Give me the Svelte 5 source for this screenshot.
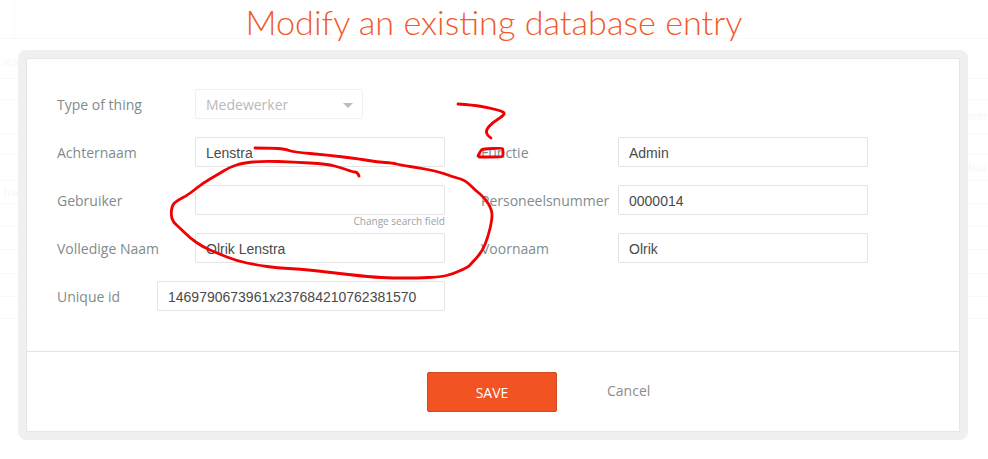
<script>
  // rows of the table that sits faded behind the modal
  const lines = [38, 78, 99, 133, 154, 180, 203, 226, 249, 273, 296, 318];
  const ghosts = [
    { text: 'ata', top: 52, right: false },
    { text: 'tra', top: 182, right: false },
    { text: 'entr', top: 106, right: true },
    { text: 'Naa', top: 158, right: true },
  ];

  // red pen annotation, traced from the screenshot
  const strokes = [
    [[255,148],[270,148],[285,149],[293,152],[327,155],[360,159],[377,162],[393,163],[400,165],[420,168],[440,172],[453,177],[465,180],[475,190],[485,198],[492,210],[492,220],[488,237],[482,252],[470,265],[468,267],[453,274],[440,277],[417,278],[393,278],[370,277],[327,272],[300,269],[277,268],[257,265],[237,261],[217,253],[203,247],[190,238],[180,228],[173,222],[171,215],[172,205],[178,200],[188,195],[203,183],[217,175],[230,167],[243,163],[263,161],[293,162],[327,164],[342,168],[353,172],[357,172],[359,176]],
    [[458,104],[473,105],[490,108],[505,112],[503,116],[492,123],[486,130],[487,135],[491,138]],
    [[478,156],[481,150],[483,149],[502,148],[503,149],[503,156],[501,157],[481,157],[478,157],[480,152]],
  ];

  function smooth(pts) {
    let d = `M${pts[0][0]} ${pts[0][1]}`;
    for (let i = 1; i < pts.length - 1; i++) {
      const mx = (pts[i][0] + pts[i + 1][0]) / 2;
      const my = (pts[i][1] + pts[i + 1][1]) / 2;
      d += ` Q${pts[i][0]} ${pts[i][1]} ${mx} ${my}`;
    }
    const last = pts[pts.length - 1];
    return d + ` L${last[0]} ${last[1]}`;
  }
</script>

<div class="backdrop">
  <div class="corner"></div>
  {#each lines as y}
    <div class="line" style="top:{y}px"></div>
  {/each}
  {#each ghosts as g}
    <span class="ghost" class:right={g.right} style="top:{g.top}px">{g.text}</span>
  {/each}
</div>

<main class="page">
  <h1>Modify an existing database entry</h1>

  <section class="modal">
    <div class="modal-inner">
      <form class="fields">
        <div class="row">
          <label for="type">Type of thing</label>
          <div class="select">
            <select id="type" disabled><option>Medewerker</option></select>
            <span class="caret"></span>
          </div>
        </div>
        <div></div>

        <div class="row">
          <label for="achternaam">Achternaam</label>
          <input id="achternaam" value="Lenstra" />
        </div>
        <div class="row">
          <label for="functie">Functie</label>
          <input id="functie" value="Admin" />
        </div>

        <div class="row">
          <label for="gebruiker">Gebruiker</label>
          <div class="with-hint">
            <input id="gebruiker" value="" />
            <a class="hint" href="#search">Change search field</a>
          </div>
        </div>
        <div class="row">
          <label for="personeel">Personeelsnummer</label>
          <input id="personeel" value="0000014" />
        </div>

        <div class="row">
          <label for="naam">Volledige Naam</label>
          <input id="naam" value="Olrik Lenstra" />
        </div>
        <div class="row">
          <label for="voornaam">Voornaam</label>
          <input id="voornaam" value="Olrik" />
        </div>

        <div class="row">
          <label for="uid">Unique id</label>
          <input id="uid" class="wide" value="1469790673961x237684210762381570" />
        </div>
      </form>

      <footer class="actions">
        <button type="button" class="save">SAVE</button>
        <button type="button" class="cancel">Cancel</button>
      </footer>
    </div>
  </section>
</main>

<svg class="pen" width="988" height="459" viewBox="0 0 988 459" aria-hidden="true">
  {#each strokes as s}
    <path d={smooth(s)} />
  {/each}
</svg>

<style>
  :global(body) {
    background: #fff;
    font-family: "Open Sans", sans-serif;
  }

  .backdrop {
    position: absolute;
    inset: 0;
    width: 988px;
    height: 459px;
    overflow: hidden;
  }
  .corner {
    position: absolute;
    left: 14px;
    top: 0;
    height: 38px;
    width: 1px;
    background: #fafafa;
  }
  .line {
    position: absolute;
    left: 0;
    right: 0;
    height: 1px;
    background: #f9f9f9;
  }
  .ghost {
    position: absolute;
    right: 970px;
    font-size: 11px;
    line-height: 20px;
    color: #f1f7fb;
  }
  .ghost.right {
    right: auto;
    left: 968px;
    font-size: 10px;
    color: #f6f6f6;
  }

  .page {
    position: relative;
    width: 988px;
  }

  h1 {
    margin: 0;
    height: 50px;
    text-align: center;
    font-family: Lato, sans-serif;
    font-weight: 300;
    font-size: 34.2px;
    line-height: 43px;
    color: #f15a2b;
  }

  .modal {
    margin: 0 20px 0 18px;
    border: 8px solid #f0f0f0;
    border-radius: 8px;
    background: #fff;
  }
  .modal-inner {
    border: 1px solid #e6e6e6;
    background: #fff;
  }

  .fields {
    display: grid;
    grid-template-columns: 388px 387px;
    grid-auto-rows: 30px;
    column-gap: 36px;
    row-gap: 18px;
    height: 293px;
    box-sizing: border-box;
    padding: 30px 0 0 30px;
    border-bottom: 1px solid #e3e3e3;
  }

  .row {
    display: flex;
    justify-content: space-between;
    align-items: flex-start;
  }
  label {
    padding-top: 1px;
    font-size: 14px;
    line-height: 30px;
    color: #7f8c8d;
    white-space: nowrap;
  }

  input {
    width: 250px;
    height: 30px;
    box-sizing: border-box;
    margin: 0;
    padding: 1px 10px 0;
    border: 1px solid #e3e3e3;
    border-radius: 2px;
    background: #fff;
    font-family: "Liberation Sans", Arial, sans-serif;
    font-size: 14px;
    color: #4a4a4a;
    outline: none;
  }
  input.wide {
    width: 288px;
  }

  .select {
    display: flex;
    align-items: center;
    width: 168px;
    height: 30px;
    margin-right: 82px;
    position: relative;
  }
  select {
    appearance: none;
    width: 100%;
    height: 100%;
    margin: 0;
    padding: 0 10px;
    border: 1px solid #efefef;
    border-radius: 2px;
    background: #fff;
    opacity: 1;
    font-family: "Open Sans", sans-serif;
    font-size: 14px;
    color: #b9b9b9;
  }
  .caret {
    position: absolute;
    right: 10px;
    top: 14px;
    border-left: 5px solid transparent;
    border-right: 5px solid transparent;
    border-top: 5px solid #bdbdbd;
  }

  .with-hint {
    width: 250px;
    height: 30px;
  }
  .hint {
    display: block;
    text-align: right;
    font-size: 10px;
    line-height: 12px;
    color: #98a2a5;
    text-decoration: none;
  }

  .actions {
    display: grid;
    grid-template-columns: 1fr 130px 1fr;
    align-items: start;
    height: 79px;
    box-sizing: border-box;
    padding: 20px 2px 0 0;
  }
  .actions button {
    font-family: "Open Sans", sans-serif;
    font-size: 14px;
    cursor: pointer;
  }
  .save {
    grid-column: 2;
    height: 40px;
    border: 1px solid #d0481f;
    border-radius: 2px;
    background: #f15323;
    color: #fff;
  }
  .cancel {
    justify-self: start;
    margin: 9px 0 0 50px;
    padding: 0;
    border: 0;
    background: none;
    color: #8c8c8c;
  }

  .pen {
    position: absolute;
    left: 0;
    top: 0;
    pointer-events: none;
  }
  .pen path {
    fill: none;
    stroke: #f00000;
    stroke-width: 2.8;
    stroke-linecap: round;
    stroke-linejoin: round;
  }
</style>
